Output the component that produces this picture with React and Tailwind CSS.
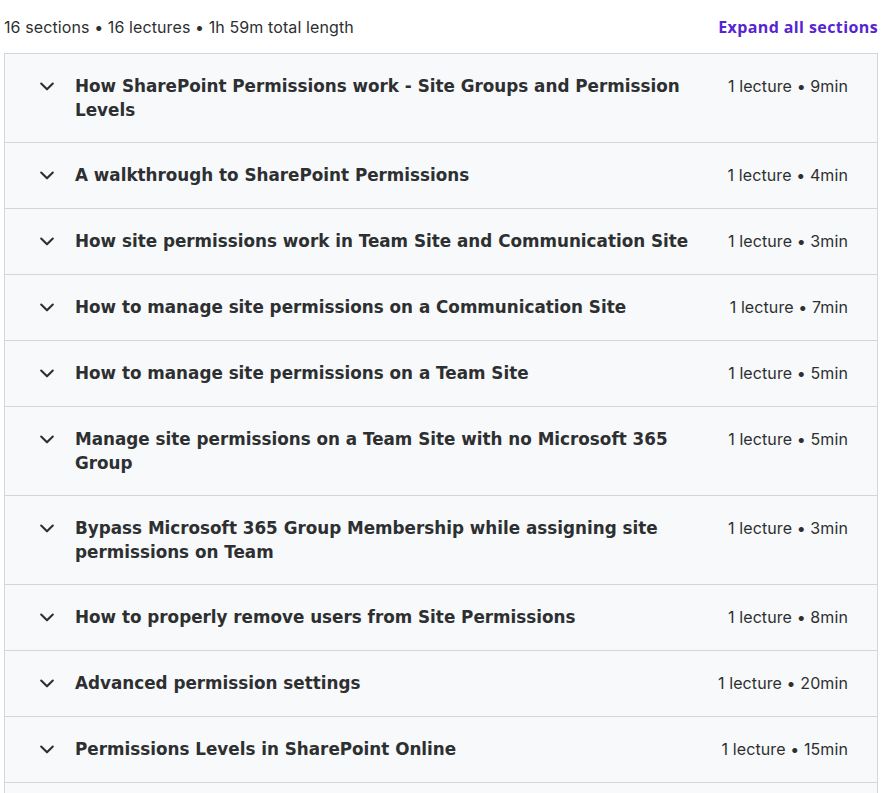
import React from 'react';

const sections = [
    { title: 'How SharePoint Permissions work - Site Groups and Permission Levels', meta: '1 lecture • 9min' },
    { title: 'A walkthrough to SharePoint Permissions', meta: '1 lecture • 4min' },
    { title: 'How site permissions work in Team Site and Communication Site', meta: '1 lecture • 3min' },
    { title: 'How to manage site permissions on a Communication Site', meta: '1 lecture • 7min' },
    { title: 'How to manage site permissions on a Team Site', meta: '1 lecture • 5min' },
    { title: 'Manage site permissions on a Team Site with no Microsoft 365 Group', meta: '1 lecture • 5min' },
    { title: 'Bypass Microsoft 365 Group Membership while assigning site permissions on Team', meta: '1 lecture • 3min' },
    { title: 'How to properly remove users from Site Permissions', meta: '1 lecture • 8min' },
    { title: 'Advanced permission settings', meta: '1 lecture • 20min' },
    { title: 'Permissions Levels in SharePoint Online', meta: '1 lecture • 15min' },
    { title: 'Custom Permission Levels', meta: '1 lecture • 6min' },
    { title: 'Sharing settings in SharePoint Online', meta: '1 lecture • 7min' },
];

const Chevron = () => (
    <svg viewBox="0 0 24 24" className="w-5 h-5 shrink-0 mt-[2px]" fill="none" stroke="#2d2f31" strokeWidth="2.5" strokeLinecap="round" strokeLinejoin="round">
        <path d="M5 9l7 7 7-7" />
    </svg>
);

const App = () => {
    return (
        <div className="w-[882px] px-1 bg-white text-[#2d2f31]" style={{ fontFamily: 'Inter, "Liberation Sans", sans-serif' }}>
            {/* summary */}
            <div className="h-[53px] flex items-center justify-between">
                <span className="text-[16px] leading-6 tracking-[0.1px]">16 sections • 16 lectures • 1h 59m total length</span>
                <button className="text-[16px] font-bold text-[#5624d0] tracking-[0.4px] font-['Open_Sans']">Expand all sections</button>
            </div>

            {/* sections */}
            <div className="border border-[#d1d7dc] border-b-0">
                {sections.map((s, i) => (
                    <div key={i} className="flex items-start bg-[#f7f9fa] border-b border-[#d1d7dc] pl-[32px] pr-[29px] py-5">
                        <Chevron />
                        <h3 className="flex-1 ml-[18px] text-[16.8px] leading-6 font-bold font-['DejaVu_Sans']">{s.title}</h3>
                        <span className="ml-6 shrink-0 text-[16px] leading-[25px] tracking-[0.1px]">{s.meta}</span>
                    </div>
                ))}
            </div>
        </div>
    );
};

export default App;
